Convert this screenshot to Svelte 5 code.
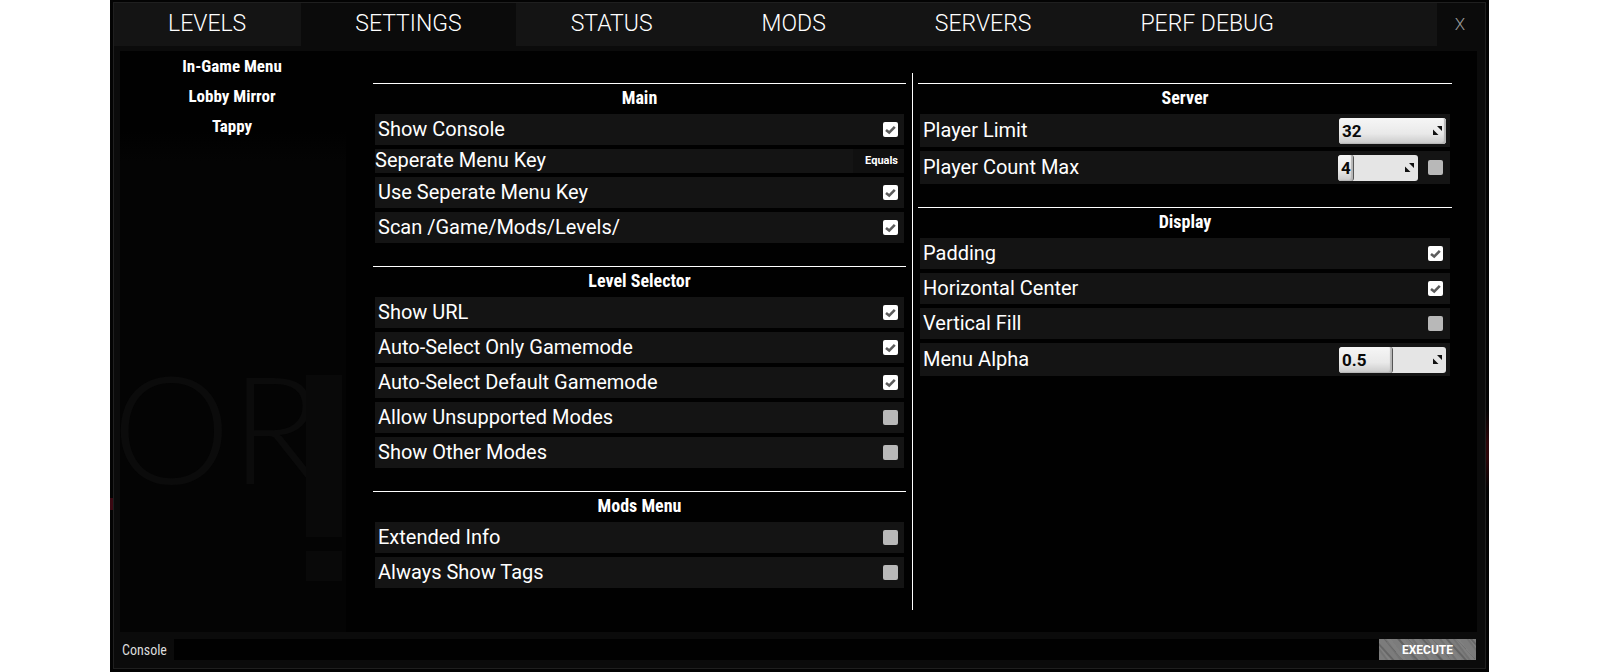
<script>
  const tabs = ['LEVELS', 'SETTINGS', 'STATUS', 'MODS', 'SERVERS', 'PERF DEBUG'];
  const pages = ['In-Game Menu', 'Lobby Mirror', 'Tappy'];
  let active = $state('SETTINGS');
  let command = $state('');

  let columns = $state([
    [
      {
        title: 'Main',
        rows: [
          { label: 'Show Console', kind: 'toggle', on: true },
          { label: 'Seperate Menu Key', kind: 'key', value: 'Equals' },
          { label: 'Use Seperate Menu Key', kind: 'toggle', on: true },
          { label: 'Scan /Game/Mods/Levels/', kind: 'toggle', on: true }
        ]
      },
      {
        title: 'Level Selector',
        rows: [
          { label: 'Show URL', kind: 'toggle', on: true },
          { label: 'Auto-Select Only Gamemode', kind: 'toggle', on: true },
          { label: 'Auto-Select Default Gamemode', kind: 'toggle', on: true },
          { label: 'Allow Unsupported Modes', kind: 'toggle', on: false },
          { label: 'Show Other Modes', kind: 'toggle', on: false }
        ]
      },
      {
        title: 'Mods Menu',
        rows: [
          { label: 'Extended Info', kind: 'toggle', on: false },
          { label: 'Always Show Tags', kind: 'toggle', on: false }
        ]
      }
    ],
    [
      {
        title: 'Server',
        rows: [
          { label: 'Player Limit', kind: 'number', value: '32', fill: 100 },
          { label: 'Player Count Max', kind: 'override', value: '4', fill: 20, on: false }
        ]
      },
      {
        title: 'Display',
        rows: [
          { label: 'Padding', kind: 'toggle', on: true },
          { label: 'Horizontal Center', kind: 'toggle', on: true },
          { label: 'Vertical Fill', kind: 'toggle', on: false },
          { label: 'Menu Alpha', kind: 'number', value: '0.5', fill: 50 }
        ]
      }
    ]
  ]);

  const idOf = (label) => label.toLowerCase().replace(/[^a-z]+/g, '-');
</script>

{#snippet check(row, id, name)}
  <span class="check">
    <input type="checkbox" {id} aria-label={name} bind:checked={row.on} />
    {#if row.on}
      <svg viewBox="0 0 15 15" aria-hidden="true">
        <path d="M3 8 L6.2 10.6 L11.8 4.8" />
      </svg>
    {/if}
  </span>
{/snippet}

{#snippet spin(row, id)}
  <span class="spin" class:short={row.kind === 'override'}>
    <span class="fill" class:part={row.fill < 100} style="width: {row.fill}%"></span>
    <input type="text" inputmode="decimal" {id} bind:value={row.value} />
    <svg viewBox="0 0 9 9" aria-hidden="true">
      <path d="M4 0H9V5Z M0 3.5V9H5.5Z" />
    </svg>
  </span>
{/snippet}

<div class="screen">
  <main class="window">
    <div class="frame">
      <header>
        <nav class="tabs">
          {#each tabs as tab}
            <button class:active={tab === active} onclick={() => (active = tab)}>{tab}</button>
          {/each}
        </nav>
        <button class="close" aria-label="Close">X</button>
      </header>

      <div class="body">
        <aside>
          <div class="scene" aria-hidden="true">
            <span class="sign">OR</span>
            <span class="pillar"></span>
            <span class="block"></span>
          </div>
          {#each pages as page}
            <button>{page}</button>
          {/each}
        </aside>
        <div class="settings">
          {#each columns as groups}
            <div class="column">
              {#each groups as group}
                <section>
                  <h2>{group.title}</h2>
                  <div class="rows">
                    {#each group.rows as row}
                      {@const id = idOf(row.label)}
                      <div class="row {row.kind}">
                        <label for={id}>{row.label}</label>
                        {#if row.kind === 'key'}
                          <button {id}>{row.value}</button>
                        {:else if row.kind === 'toggle'}
                          {@render check(row, id)}
                        {:else}
                          {@render spin(row, id)}
                          {#if row.kind === 'override'}
                            {@render check(row, id + '-on', row.label)}
                          {/if}
                        {/if}
                      </div>
                    {/each}
                  </div>
                </section>
              {/each}
            </div>
          {/each}
        </div>
      </div>

      <form class="console" onsubmit={(e) => e.preventDefault()}>
        <label for="command">Console</label>
        <input id="command" type="text" bind:value={command} />
        <button>EXECUTE</button>
      </form>
    </div>
  </main>
</div>

<style>
  :global(body) {
    margin: 0;
    background: #fff;
  }
  .screen {
    --narrow: 'Roboto Condensed', 'Liberation Sans Narrow', 'Liberation Sans', sans-serif;
    display: flex;
    box-sizing: border-box;
    min-height: 100vh;
    padding: 0 111px 0 110px;
    font-family: Roboto, sans-serif;
    color: #fff;
  }
  button,
  input {
    margin: 0;
    padding: 0;
    border: 0;
    border-radius: 0;
    background: none;
    color: inherit;
    font: inherit;
  }
  button {
    cursor: pointer;
  }
  .window {
    flex: 1;
    display: flex;
    padding: 2px 3px 3px;
    background:
      linear-gradient(#3a0812, #3a0812) left 498px / 3px 12px no-repeat,
      linear-gradient(transparent, #2c0508 40%, #2c0508 60%, transparent) right 410px / 3px 80px no-repeat,
      #030303;
  }
  .frame {
    flex: 1;
    display: flex;
    flex-direction: column;
    border: 1px solid #1f1f1f;
    background: #0b0b0b;
  }
  header {
    display: flex;
    height: 48px;
  }
  .tabs {
    flex: 1;
    display: flex;
    gap: 1px;
    height: 43px;
    background: #141414;
  }
  .tabs button {
    padding: 0 54px 2px;
    font-size: 23px;
    font-weight: 300;
    line-height: 28px;
  }
  .tabs .active {
    background: #0b0b0b;
  }
  .close {
    width: 48px;
    height: 43px;
    padding: 0 2px 2px 0;
    font-size: 17px;
    font-weight: 300;
    color: #999;
  }
  .body {
    flex: 1;
    display: flex;
    margin: 0 8px 0 6px;
    background: #010101;
  }
  aside {
    position: relative;
    flex: 0 0 226px;
    display: flex;
    flex-direction: column;
    align-items: center;
    background: linear-gradient(#010101 80px, #040404 110px, #040404);
  }
  aside button {
    position: relative;
    height: 30px;
    padding-right: 2px;
    font-family: var(--narrow);
    font-size: 17px;
    font-weight: 700;
    line-height: 30px;
  }
  .scene {
    position: absolute;
    inset: 0;
  }
  .sign {
    position: absolute;
    left: -8px;
    top: 285px;
    font-family: Lato, sans-serif;
    font-size: 150px;
    font-weight: 300;
    line-height: 180px;
    color: #0b0b0b;
  }
  .pillar,
  .block {
    position: absolute;
    left: 186px;
    width: 36px;
    background: #090909;
  }
  .pillar {
    top: 324px;
    height: 162px;
  }
  .block {
    top: 500px;
    height: 30px;
  }
  .settings {
    flex: 1;
    display: grid;
    grid-template-columns: 539fr 540fr;
    padding: 22px 25px 22px 27px;
  }
  .column {
    display: flex;
    flex-direction: column;
    gap: 23px;
    padding: 10px 6px 20px 0;
  }
  .column + .column {
    padding: 10px 0 20px 5px;
    border-left: 1px solid #fff;
  }
  h2 {
    margin: 0;
    padding-bottom: 2px;
    border-top: 1px solid #fff;
    font-family: var(--narrow);
    font-size: 18px;
    font-weight: 700;
    line-height: 28px;
    text-align: center;
  }
  .rows {
    display: flex;
    flex-direction: column;
    gap: 4px;
    padding: 0 2px;
  }
  .row {
    display: flex;
    align-items: center;
    height: 31px;
    padding: 0 6px 0 3px;
    background: #141414;
  }
  .column + .column .row {
    padding-right: 7px;
  }
  .row.number,
  .row.override {
    height: 33px;
  }
  .column + .column .row.number {
    padding-right: 4px;
  }
  .row.key {
    height: 24px;
    padding: 0;
  }
  .row label {
    flex: 1;
    padding-bottom: 2px;
    font-size: 20px;
    line-height: 22px;
  }
  .row.key button {
    align-self: stretch;
    padding: 0 6px 2px 12px;
    background: #101010;
    font-size: 11px;
    font-weight: 700;
  }
  .check {
    position: relative;
    width: 15px;
    height: 15px;
  }
  .check input {
    display: block;
    width: 15px;
    height: 15px;
    border-radius: 2px;
    background: #b8b8b8;
    appearance: none;
  }
  .check input:checked {
    background: #fff;
  }
  .check svg {
    position: absolute;
    inset: 0;
    pointer-events: none;
  }
  .check path {
    fill: none;
    stroke: #5c5c5c;
    stroke-width: 2.6;
  }
  .spin {
    position: relative;
    display: flex;
    align-items: center;
    box-sizing: border-box;
    width: 107px;
    height: 26px;
    padding: 0 4px 0 3px;
    border-radius: 3px;
    background: #e5e5e5;
    overflow: hidden;
    color: #0a0a0a;
  }
  .short {
    width: 80px;
    margin-right: 10px;
  }
  .fill {
    position: absolute;
    inset: 0 auto 0 0;
    box-sizing: border-box;
    border-radius: 3px;
    background: linear-gradient(#f6f6f6, #e9e9e9 60%, #c9c9c9);
    box-shadow: inset -2px -1px 1px #b5b5b5;
  }
  .part {
    border-right: 1px solid #555;
  }
  .spin input {
    position: relative;
    flex: 1;
    min-width: 0;
    font-size: 17px;
    font-weight: 700;
    line-height: 26px;
  }
  .spin svg {
    position: relative;
    width: 9px;
    height: 9px;
    fill: #111;
  }
  .console {
    display: flex;
    height: 21px;
    margin: 7px 9px 8px 6px;
  }
  .console label {
    width: 54px;
    padding-left: 2px;
    box-sizing: border-box;
    font-family: var(--narrow);
    font-size: 14px;
    line-height: 22px;
    color: #ddd;
  }
  .console input {
    flex: 1;
    min-width: 0;
    background: #010101;
    font-size: 14px;
  }
  .console button {
    width: 97px;
    background:
      repeating-linear-gradient(48deg, transparent 0 9px, #5559 10px 11px, transparent 12px 17px, #5556 18px),
      repeating-linear-gradient(53deg, #7c7c7c 0 5px, #727272 6px 7px, #808080 8px 11px);
    font-size: 12px;
    font-weight: 700;
  }
</style>
